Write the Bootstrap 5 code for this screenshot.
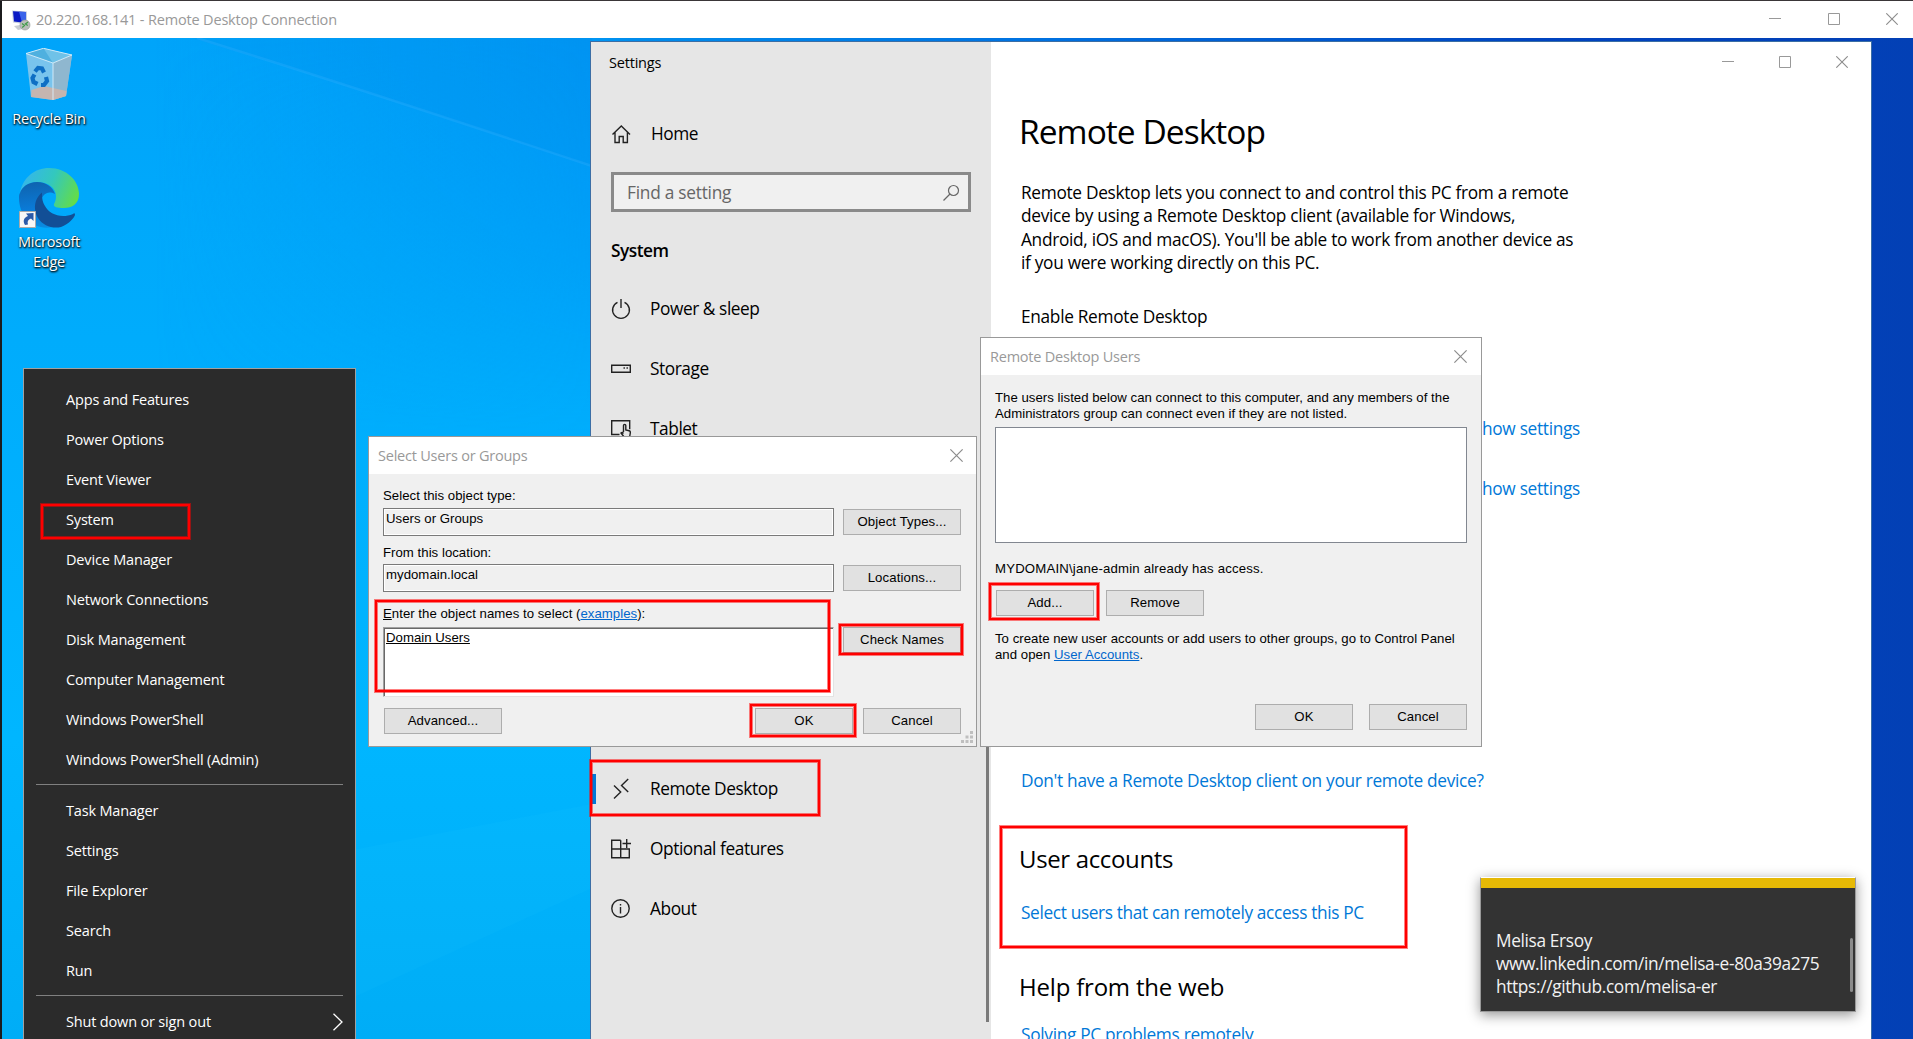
<!DOCTYPE html>
<html lang="en">
<head>
<meta charset="utf-8">
<title>20.220.168.141 - Remote Desktop Connection</title>
<link href="https://cdn.jsdelivr.net/npm/bootstrap@5.3.0/dist/css/bootstrap.min.css" rel="stylesheet">
<style>
  html, body { height: 100%; overflow: hidden; }
  body { font-family: "Open Sans", "Noto Sans", sans-serif; font-size: 14.5px; color: #000; background: #1b1b1d; letter-spacing: -.2px; }
  a { text-decoration: none; }
  svg { display: block; flex: none; }

  /* outer session window */
  .session { height: 1039px; padding: 1px 0 0 2px; background: linear-gradient(#3a3638, #3a3638) 0 0/100% 1px no-repeat, #1b1b1d; }
  .session-bar { height: 37px; background: #fff; color: #999; padding: 0 15px 0 9px; }
  .session-bar .caption { margin-left: 5px; line-height: 37px; letter-spacing: -.17px; }
  .session-bar .ctl { gap: 46.5px; margin-top: -1px; }
  .wallpaper { position: relative; flex: 1; overflow: hidden; background: #00b0fd; }
  .scene { position: absolute; inset: 0; width: 100%; height: 100%; }

  /* desktop shortcuts */
  .shortcuts { position: absolute; left: 0; top: 10px; width: 94px; color: #fff; text-align: center; line-height: 20px; text-shadow: 1px 1px 2px #000, 0 1px 2px rgba(0,0,0,.8); }
  .item-bin svg { margin-bottom: 8px; }
  .item-edge { margin-top: 39px; }
  .item-edge svg { margin-bottom: 4px; }

  /* windows */
  .win { position: absolute; }
  .settings { left: 588px; top: 3px; width: 1282px; height: 1010px; border: 1px solid #3b6ea5; border-width: 1px 1px 0 1px; background: #fff; font-size: 17.3px; overflow: hidden; }
  .settings .ctl { position: absolute; right: 23px; top: 14px; gap: 45px; }
  .side { width: 400px; background: #e6e6e6; padding-left: 20px; letter-spacing: -.43px; position: relative; flex: none; }
  .side .caption { font-size: 14.5px; letter-spacing: -.2px; height: 41px; line-height: 42px; margin-left: -2px; }
  .side .nav-link { color: #000; padding: 0; height: 60px; gap: 19px; display: flex; align-items: center; }
  .side .nav-link.home { height: 58px; margin-top: 22px; gap: 20px; }
  .side .nav-link.current { margin-top: 300px; }
  .side .nav-link.current::before { content: ""; position: absolute; left: 0; width: 5px; height: 30px; background: #0078d7; }
  .side .find { width: 360px; height: 40px; border: 3px solid #8a8a8a; background: #f0f0f0; color: #666; margin-top: 9px; padding: 1px 8px 0 13px; letter-spacing: -.25px; }
  .side .group { height: 39px; line-height: 39px; margin: 19px 0 9px; font-weight: 600; letter-spacing: -.5px; }
  .side .thumb { position: absolute; right: 2px; top: 500px; height: 480px; width: 3px; background: #7a7a7a; }
  .pane { padding: 64px 0 0 30px; letter-spacing: -.31px; line-height: 24px; }
  .pane h1 { font-size: 33.5px; line-height: 50px; letter-spacing: -.95px; margin: 0 0 25px -2px; font-weight: 400; }
  .pane h2 { font-size: 24px; line-height: 34px; letter-spacing: -.35px; margin: 49px 0 25px -2px; font-weight: 400; }
  .pane h2.help { margin: 45px 0 19px -2px; letter-spacing: -.2px; }
  .pane .about { line-height: 23.3px; margin-bottom: 31px; white-space: nowrap; }
  .pane .links { width: 559px; padding-top: 88px; margin-bottom: 268px; }
  .pane .links a + a { margin-top: 36px; }
  .pane a { color: #0078d7; display: block; }
  .pane a.pick-link { letter-spacing: -.36px; }

  /* classic dialogs */
  .dlg { background: #f0f0f0; border: 1px solid #999; font-family: "Liberation Sans", Arial, sans-serif; font-size: 13.2px; letter-spacing: .03px; line-height: 16px; white-space: nowrap; }
  .dlg-bar { height: 37px; background: #fff; color: #999; font-family: "Open Sans", "Noto Sans", sans-serif; font-size: 14.5px; letter-spacing: -.22px; line-height: 37px; }
  .dlg-bar svg { margin-top: -1px; }
  .dlg .btn { height: 26px; width: 98px; padding: 0; line-height: 24px; font-size: 13.2px; border: 1px solid #adadad; border-radius: 0; background: #e1e1e1; color: #000; letter-spacing: .1px; }
  .dlg .btn.wide { width: 118px; }
  .dlg a { color: #0066cc; text-decoration: underline; }
  .users { left: 978px; top: 299px; width: 502px; height: 410px; }
  .users .dlg-bar { padding: 0 14px 0 9px; }
  .users .inside { padding: 15px 14px 0 14px; }
  .users .list { height: 116px; border: 1px solid #828790; background: #fff; margin: 5px 0 18px; }
  .users .access { letter-spacing: .18px; }
  .users .edit { gap: 12px; padding: 13px 0 15px 1px; }
  .users .confirm { gap: 16px; padding-top: 41px; }
  .pick { left: 366px; top: 398px; width: 609px; height: 311px; }
  .pick .dlg-bar { padding: 0 13px 0 9px; }
  .pick .inside { padding: 14px 15px 0 14px; }
  .pick .label-2 { margin: 9px 0 3px; }
  .pick .label-3 { margin: 14px 0 5px; }
  .pick .pair { display: flex; justify-content: space-between; align-items: flex-start; }
  .pick .pair .btn { margin-top: 1px; }
  .pick .pair.big .btn { margin-top: 0; }
  .pick .field { width: 451px; height: 28px; border: 1px solid #7a7a7a; box-shadow: inset 0 0 0 1px #fff; padding: 2px; }
  .pick .names { width: 451px; height: 70px; border: 1px solid #a0a0a0; border-right-color: #e3e3e3; border-bottom-color: #e3e3e3; box-shadow: inset 1px 1px 0 #696969; background: #fff; padding: 2px; }
  .pick .confirm { gap: 10px; padding-top: 11px; padding-left: 1px; }
  .grip { position: absolute; right: 3px; bottom: 3px; }

  /* Win+X menu */
  .winx { position: absolute; left: 21px; top: 330px; width: 333px; height: 690px; background: #2b2b2b; border: 1px solid #a0a0a0; color: #fff; padding: 11px 12px 0 12px; letter-spacing: -.17px; }
  .winx .entry { height: 40px; line-height: 40px; padding-left: 30px; }
  .winx .rule { height: 1px; background: #808080; margin: 4px 0 6px; }

  /* sticky note */
  .note { left: 1478px; top: 839px; width: 376px; height: 135px; border: 1px solid #999; border-top-color: #fff; background: #333; color: #f2f2f2; box-shadow: 0 3px 12px rgba(0,0,0,.42); font-size: 17.3px; letter-spacing: -.35px; }
  .note .strip { height: 10px; background: #e6b905; }
  .note .lines { padding: 41px 0 0 15px; line-height: 23px; }
  .note .thumb { position: absolute; right: 2px; top: 60px; width: 3px; height: 54px; background: #8a8a8a; border-radius: 2px; }

  /* red call-outs drawn over the windows */
  .callout { position: absolute; border: 2px solid #f00; outline: 1px solid rgba(255,0,0,.5); box-shadow: inset 0 0 0 1px rgba(255,0,0,.5); }
  .c-system { left: 39px; top: 466px; width: 149px; height: 35px; }
  .c-rdp { left: 588px; top: 722px; width: 230px; height: 56px; }
  .c-accounts { left: 998px; top: 788px; width: 407px; height: 122px; }
  .c-add { left: 987px; top: 545px; width: 110px; height: 37px; }
  .c-names { left: 373px; top: 562px; width: 455px; height: 92px; }
  .c-check { left: 837px; top: 586px; width: 124px; height: 31px; }
  .c-ok { left: 748px; top: 666px; width: 106px; height: 33px; }
</style>
</head>
<body>
<svg width="0" height="0" class="position-absolute">
  <symbol id="min" viewBox="0 0 12 12"><path d="M0 5.500h12" stroke="#999" fill="none"/></symbol>
  <symbol id="max" viewBox="0 0 12 12"><path d="M.5.5h11v11H.5z" stroke="#999" fill="none"/></symbol>
  <symbol id="cls" viewBox="0 0 12 12"><path d="M.3.3l11.400 11.400M11.700.3L.3 11.700" stroke="#8c8c8c" stroke-width="1.100" fill="none"/></symbol>
</svg>

<div class="session d-flex flex-column">
  <header class="session-bar d-flex align-items-center">
    <svg width="20" height="22" viewBox="0 0 20 22">
      <path d="M3 17l6-1 3 4-5 1z" fill="#c9cdd2"/><path d="M1 1.500l15 1v13L2 13.500z" fill="#c8d0e0"/>
      <path d="M2 2.300l13 .8v11L3 12.600z" fill="#0a19c4"/><path d="M8 2.700l7 .4v11l-4-.5z" fill="#3a63ea"/>
      <circle cx="14" cy="16" r="5" fill="#b9bdb9" stroke="#8f9590" stroke-width=".6"/>
      <path d="M11 14.500l2.500 2-2.300 2M17 13l-2.600 2 2.400 1.500" stroke="#3d9b46" stroke-width="1.200" fill="none"/>
    </svg>
    <span class="caption flex-grow-1">20.220.168.141 - Remote Desktop Connection</span>
    <div class="ctl d-flex">
      <svg width="12" height="12"><use href="#min"/></svg>
      <svg width="12" height="12"><use href="#max"/></svg>
      <svg width="12" height="12"><use href="#cls"/></svg>
    </div>
  </header>

  <main class="wallpaper">
    <svg class="scene" viewBox="0 0 1911 1001" preserveAspectRatio="none">
      <defs>
        <linearGradient id="sky" x1="0" y1="0" x2="0" y2="1"><stop offset="0" stop-color="#00a4fa"/><stop offset=".3" stop-color="#00acfc"/><stop offset=".7" stop-color="#00b6ff"/><stop offset="1" stop-color="#00adf6"/></linearGradient>
        <linearGradient id="deep" x1="0" y1="0" x2="1" y2="0"><stop offset=".08" stop-color="#0098f4" stop-opacity="0"/><stop offset=".31" stop-color="#0096f4"/><stop offset=".33" stop-color="#008cec"/><stop offset=".55" stop-color="#0070e0"/><stop offset=".8" stop-color="#0044c0"/><stop offset="1" stop-color="#0340b5"/></linearGradient>
        <linearGradient id="fade" x1="0" y1="0" x2="0" y2="1"><stop offset="0" stop-color="#fff"/><stop offset=".4" stop-color="#000"/></linearGradient>
        <mask id="top"><rect width="1911" height="1001" fill="url(#fade)"/><rect x="1500" width="411" height="1001" fill="#fff"/></mask>
      </defs>
      <rect width="1911" height="1001" fill="url(#sky)"/>
      <rect width="1911" height="1001" fill="url(#deep)" mask="url(#top)"/>
      <path d="M190 0Q340 44 590 128V0z" fill="#0088e8" opacity=".16"/>
      <path d="M195 0Q340 45 590 128" stroke="#3bb4ff" stroke-width="2.500" opacity=".25" fill="none"/>
      <path d="M350 812L590 766V850L350 960z" fill="#1cc4ff" opacity=".12"/>
    </svg>

    <div class="shortcuts">
      <div class="item-bin">
        <svg class="mx-auto" width="46" height="53" viewBox="0 0 46 53">
          <path d="M0 5.500L17.500.3 46 7 40 48 27 52 5 49z" fill="#8ec9ea" opacity=".85"/>
          <path d="M0 5.500L17.500.3 46 7 27 15z" fill="#4fb0df"/><path d="M17.500.3L46 7 27 15z" fill="#6fc2e8"/>
          <path d="M27 15L46 7 40 48 27 52z" fill="#8fb7cf"/>
          <path d="M5.500 42L18 38l22.500 5-.5 5-13 4L5 49z" fill="#c5b5b0"/>
          <path d="M0 5.500L17.500.3 46 7 27 15zM27 15v37" stroke="#d8eefa" stroke-width=".9" fill="none"/>
          <g fill="none" stroke="#0f6fc4" stroke-width="4.200"><path d="M9 23.500l3-3.500 4 .5 2 4"/><path d="M20 29l1 4-3 4h-3"/><path d="M11.500 36l-4-2-1-4 2-3.500"/></g>
        </svg>
        <div>Recycle Bin</div>
      </div>
      <div class="item-edge">
        <svg class="mx-auto" width="60" height="60" viewBox="0 0 60 60">
          <defs>
            <linearGradient id="e1" x1="0" y1=".3" x2="1" y2=".6"><stop offset="0" stop-color="#35b5ee"/><stop offset=".5" stop-color="#33c8bd"/><stop offset="1" stop-color="#63dc4a"/></linearGradient>
            <linearGradient id="e2" x1=".3" y1="0" x2=".4" y2="1"><stop offset="0" stop-color="#0f63ae"/><stop offset=".6" stop-color="#0a7bd8"/><stop offset="1" stop-color="#0a8be0"/></linearGradient>
          </defs>
          <path d="M1 25C4 9 16 0 30 0c18 0 30 13 30 26 0 10-7 14-15 14-7 0-11-1-10-4 1-2 2-4 2-8 0-8-8-14-19-14C9 14 3 19 1 25z" fill="url(#e1)"/>
          <path d="M1 25c2-6 8-11 17-11 10 0 16 6 18 12-8-4-12 1-14 6-5 12 2 22 12 27C14 63 0 48 0 30c0-2 0-4 1-5z" fill="url(#e2)"/>
          <path d="M23 24.500C15 31 14 42 19 50c5 8 15 11 23 9 8-3 13-9 14-12 0-2-1-2-2-1-12 5-24 0-28-8-3-5-3-9-3-13.500z" fill="#124f96"/>
          <path d="M.5 43.500h16v16H.5z" fill="#f7f7f7" stroke="#aaa"/>
          <path d="M6 57c-3-5 0-8 3-9l-2-2.500 7.500-.5v8l-2.500-2.500c-3 1-4 3-3 6z" fill="#2c5aa8"/>
        </svg>
        <div>Microsoft<br>Edge</div>
      </div>
    </div>

    <section class="win settings d-flex">
      <nav class="side">
        <div class="caption">Settings</div>
        <a class="nav-link home" href="#">
          <svg width="20" height="20" viewBox="0 0 20 20" fill="none" stroke="#222" stroke-width="1.400"><path d="M1.500 10.500L10.300 2l8.700 8.500M4 8.500v10h4.200v-6h4v6h4.200v-10"/></svg>Home</a>
        <div class="find d-flex align-items-center justify-content-between"><span>Find a setting</span>
          <svg width="18" height="18" viewBox="0 0 18 18" fill="none" stroke="#666" stroke-width="1.200"><circle cx="11.500" cy="6.500" r="5"/><path d="M8 10l-6.500 6.500"/></svg></div>
        <div class="group">System</div>
        <a class="nav-link" href="#">
          <svg width="20" height="22" viewBox="0 0 20 22" fill="none" stroke="#222" stroke-width="1.400"><path d="M6.500 4.300a8.400 8.400 0 1 0 7 0M10 1v9"/></svg>Power &amp; sleep</a>
        <a class="nav-link" href="#">
          <svg width="20" height="20" viewBox="0 0 20 20" fill="none" stroke="#222" stroke-width="1.400"><path d="M.7 6.200h18.600v7H.7zM12.500 9h1.400M15.500 9h1.400"/></svg>Storage</a>
        <a class="nav-link" href="#">
          <svg width="20" height="20" viewBox="0 0 20 20" fill="none" stroke="#222" stroke-width="1.400"><path d="M8.500 15.500H.7V1.700h18v8.500M12.500 13V6.500c0-1.500 2.300-1.500 2.300 0V11l3.300.8c1.200.3 1.400 1 1.200 2.200l-.8 4.500h-5l-3.500-4.500c1-1 1.800-.5 2.500.5"/></svg>Tablet</a>
        <a class="nav-link current" href="#">
          <svg width="20" height="22" viewBox="0 0 20 22" fill="none" stroke="#222" stroke-width="1.400"><path d="M3 7.500l6.700 6.500L3 20.500M17.200 1L10.500 7.500l6.700 6.500"/></svg>Remote Desktop</a>
        <a class="nav-link" href="#">
          <svg width="20" height="20" viewBox="0 0 20 20" fill="none" stroke="#222" stroke-width="1.400"><path d="M9.700 1.300h-9v17.500h17.600V10H.7M9.700 1.300v17.500M11.500 4.500h8.500M15.700 0v9"/></svg>Optional features</a>
        <a class="nav-link" href="#">
          <svg width="20" height="20" viewBox="0 0 20 20" fill="none" stroke="#222" stroke-width="1.400"><circle cx="9.500" cy="9.500" r="8.700"/><path d="M9.500 8v6.500M9.500 5v1.500"/></svg>About</a>
        <span class="thumb"></span>
      </nav>
      <article class="pane">
        <h1>Remote Desktop</h1>
        <div class="about">Remote Desktop lets you connect to and control this PC from a remote<br>device by using a Remote Desktop client (available for Windows,<br>Android, iOS and macOS). You'll be able to work from another device as<br>if you were working directly on this PC.</div>
        <div>Enable Remote Desktop</div>
        <div class="links text-end">
          <a href="#">Show settings</a>
          <a href="#">Show settings</a>
        </div>
        <a href="#">Don't have a Remote Desktop client on your remote device?</a>
        <h2>User accounts</h2>
        <a class="pick-link" href="#">Select users that can remotely access this PC</a>
        <h2 class="help">Help from the web</h2>
        <a href="#">Solving PC problems remotely</a>
      </article>
      <div class="ctl d-flex">
        <svg width="12" height="12"><use href="#min"/></svg>
        <svg width="12" height="12"><use href="#max"/></svg>
        <svg width="12" height="12"><use href="#cls"/></svg>
      </div>
    </section>

    <section class="win dlg users">
      <div class="dlg-bar d-flex align-items-center justify-content-between">Remote Desktop Users<svg width="13" height="13"><use href="#cls"/></svg></div>
      <div class="inside">
        <div>The users listed below can connect to this computer, and any members of the<br>Administrators group can connect even if they are not listed.</div>
        <div class="list"></div>
        <div class="access">MYDOMAIN\jane-admin already has access.</div>
        <div class="edit d-flex"><button class="btn">Add...</button><button class="btn">Remove</button></div>
        <div>To create new user accounts or add users to other groups, go to Control Panel<br>and open <a href="#">User Accounts</a>.</div>
        <div class="confirm d-flex justify-content-end"><button class="btn">OK</button><button class="btn">Cancel</button></div>
      </div>
    </section>

    <section class="win dlg pick">
      <div class="dlg-bar d-flex align-items-center justify-content-between">Select Users or Groups<svg width="13" height="13"><use href="#cls"/></svg></div>
      <div class="inside">
        <div class="mb-1">Select this object type:</div>
        <div class="pair"><div class="field">Users or Groups</div><button class="btn wide">Object Types...</button></div>
        <div class="label-2">From this location:</div>
        <div class="pair"><div class="field">mydomain.local</div><button class="btn wide">Locations...</button></div>
        <div class="label-3"><u>E</u>nter the object names to select (<a href="#">examples</a>):</div>
        <div class="pair big"><div class="names"><u>Domain Users</u></div><button class="btn wide">Check Names</button></div>
        <div class="confirm d-flex"><button class="btn wide">Advanced...</button><button class="btn ms-auto">OK</button><button class="btn">Cancel</button></div>
      </div>
      <svg class="grip" width="12" height="12" fill="#bfbfbf"><path d="M9 0h3v3H9zM4.500 4.500h3v3h-3zM9 4.500h3v3H9zM0 9h3v3H0zM4.500 9h3v3h-3zM9 9h3v3H9z"/></svg>
    </section>

    <aside class="winx">
      <div class="entry">Apps and Features</div>
      <div class="entry">Power Options</div>
      <div class="entry">Event Viewer</div>
      <div class="entry">System</div>
      <div class="entry">Device Manager</div>
      <div class="entry">Network Connections</div>
      <div class="entry">Disk Management</div>
      <div class="entry">Computer Management</div>
      <div class="entry">Windows PowerShell</div>
      <div class="entry">Windows PowerShell (Admin)</div>
      <div class="rule"></div>
      <div class="entry">Task Manager</div>
      <div class="entry">Settings</div>
      <div class="entry">File Explorer</div>
      <div class="entry">Search</div>
      <div class="entry">Run</div>
      <div class="rule"></div>
      <div class="entry d-flex align-items-center justify-content-between">Shut down or sign out
        <svg width="11" height="18" viewBox="0 0 11 18" fill="none" stroke="#fff" stroke-width="1.300"><path d="M1.500.7L10 9l-8.500 8.300"/></svg></div>
    </aside>

    <section class="win note">
      <div class="strip"></div>
      <div class="lines">Melisa Ersoy<br>www.linkedin.com/in/melisa-e-80a39a275<br>https://github.com/melisa-er</div>
      <span class="thumb"></span>
    </section>

    <i class="callout c-system"></i><i class="callout c-rdp"></i><i class="callout c-accounts"></i><i class="callout c-add"></i>
    <i class="callout c-names"></i><i class="callout c-check"></i><i class="callout c-ok"></i>
  </main>
</div>
<script src="https://cdn.jsdelivr.net/npm/bootstrap@5.3.0/dist/js/bootstrap.bundle.min.js"></script>
</body>
</html>
